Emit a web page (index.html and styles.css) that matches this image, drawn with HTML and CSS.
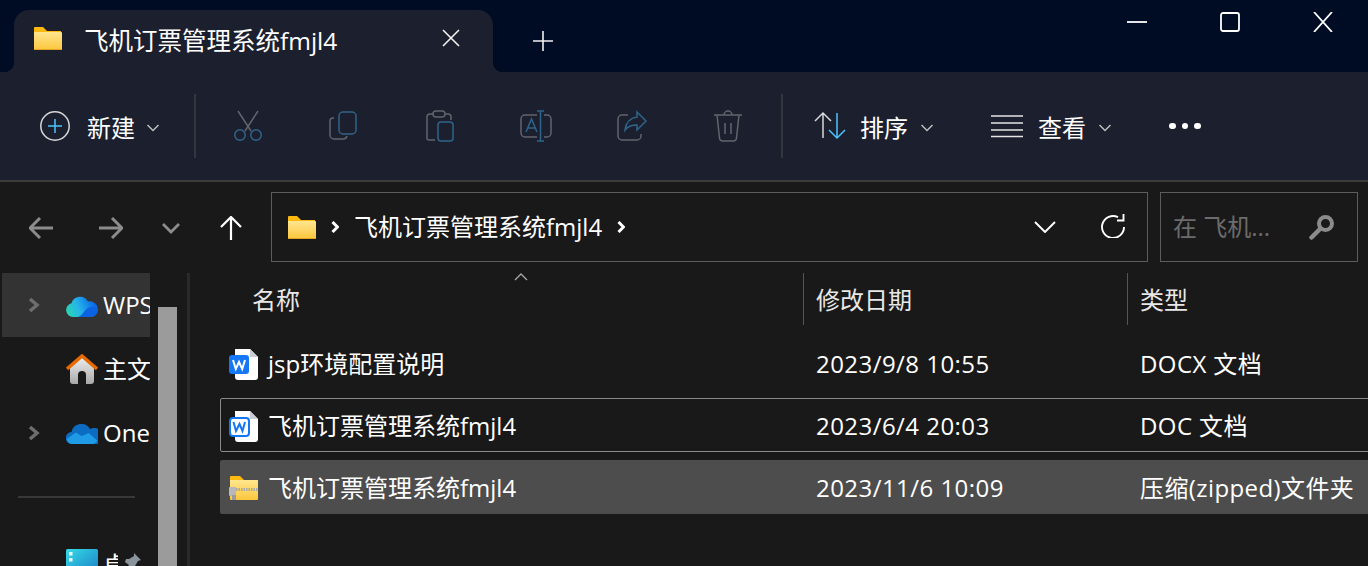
FILE: index.html
```html
<!DOCTYPE html>
<html lang="zh-CN">
  <head>
    <meta charset="UTF-8" />
    <title>飞机订票管理系统fmjl4</title>
    <link rel="stylesheet" href="styles.css">
  </head>
  <body>
    <svg class="defs" width="0" height="0">
      <defs>
        <linearGradient id="folderBody" x1="0" y1="0" x2="0" y2="1">
          <stop offset="0" stop-color="#ffe68f" />
          <stop offset="1" stop-color="#fcc63c" />
        </linearGradient>
        <linearGradient id="wpsCloud" gradientUnits="userSpaceOnUse" x1="2" y1="22" x2="28" y2="10">
          <stop offset="0" stop-color="#2ad6b4" />
          <stop offset="0.45" stop-color="#25b4ea" />
          <stop offset="1" stop-color="#0a6ae6" />
        </linearGradient>
        <linearGradient id="homeWall" x1="0" y1="0" x2="0" y2="1">
          <stop offset="0" stop-color="#f0f0f0" />
          <stop offset="1" stop-color="#a8a8a8" />
        </linearGradient>
        <linearGradient id="deskFill" x1="0" y1="0" x2="1" y2="1">
          <stop offset="0" stop-color="#36dbe6" />
          <stop offset="1" stop-color="#1b80c8" />
        </linearGradient>
        <symbol id="folder" viewBox="0 0 28 23">
          <path d="M1 0h8l4 4h14v4H0V1a1 1 0 0 1 1-1z" fill="#ffb911" />
          <path d="M0 5h27a1 1 0 0 1 1 1v16a1 1 0 0 1-1 1H1a1 1 0 0 1-1-1z" fill="url(#folderBody)" />
          <path d="M0 22h28v0a1 1 0 0 1-1 1H1a1 1 0 0 1-1-1z" fill="#e2a522" />
        </symbol>
        <symbol id="chev" viewBox="0 0 14 8">
          <path d="M1.5 1 7 6.5 12.5 1" fill="none" stroke="currentColor" stroke-width="1.5" />
        </symbol>
      </defs>
    </svg>

    <div class="titlebar">
      <div class="tab">
        <svg class="tab-folder"><use href="#folder" /></svg>
        <span class="tab-title">飞机订票管理系统fmjl4</span>
        <svg class="tab-close" viewBox="0 0 18 18"><path d="M1 1l16 16M17 1 1 17" /></svg>
      </div>
      <svg class="tab-add" viewBox="0 0 20 20"><path d="M10 0v20M0 10h20" /></svg>
      <div class="win-btns">
        <svg class="win-btn" viewBox="0 0 20 20"><path d="M0 10h20" /></svg>
        <svg class="win-btn" viewBox="0 0 20 20"><rect x="1" y="1" width="18" height="18" rx="2" /></svg>
        <svg class="win-btn" viewBox="0 0 20 20"><path d="M1 0l18 20M19 0 1 20" /></svg>
      </div>
    </div>

    <div class="toolbar">
      <div class="tool tool-new">
        <svg class="ico" viewBox="0 0 32 32">
          <circle cx="16" cy="16" r="14.2" fill="none" stroke="#d8d8d8" stroke-width="1.5" />
          <path d="M16 9v14M9 16h14" fill="none" stroke="#4cc2ff" stroke-width="1.5" />
        </svg>
        <span class="tool-label">新建</span>
        <svg class="chev-s"><use href="#chev" /></svg>
      </div>
      <div class="tool-sep"></div>
      <div class="icon-btn">
        <svg class="ico" viewBox="0 0 32 32" fill="none" stroke-width="1.5">
          <path d="M6 1 19 21M26 1 13 21" stroke="#61646c" />
          <circle cx="8" cy="25" r="5.2" stroke="#2f6389" />
          <circle cx="24" cy="25" r="5.2" stroke="#2f6389" />
        </svg>
      </div>
      <div class="icon-btn">
        <svg class="ico" viewBox="0 0 32 32" fill="none" stroke-width="1.5">
          <path d="M6 8H5a3 3 0 0 0-3 3v14a4 4 0 0 0 4 4h9a4 4 0 0 0 4-3" stroke="#61646c" />
          <rect x="11" y="2" width="17" height="22" rx="4" stroke="#2f6389" />
        </svg>
      </div>
      <div class="icon-btn">
        <svg class="ico" viewBox="0 0 32 32" fill="none" stroke-width="1.5">
          <path d="M9 4H6a3 3 0 0 0-3 3v21a2 2 0 0 0 2 2h6M21 4h3a3 3 0 0 1 3 3v3" stroke="#61646c" />
          <rect x="9" y="1" width="12" height="6" rx="3" stroke="#61646c" />
          <rect x="14" y="12" width="15" height="19" rx="3" stroke="#2f6389" />
        </svg>
      </div>
      <div class="icon-btn">
        <svg class="ico" viewBox="0 0 32 32" fill="none" stroke-width="1.5">
          <path d="M17 5H5a4 4 0 0 0-4 4v14a4 4 0 0 0 4 4h12M24 5h3a4 4 0 0 1 4 4v14a4 4 0 0 1-4 4h-3" stroke="#61646c" />
          <path d="M6 22l5.500-13L17 22M8 18h7M17 1h7M17 31h7M20.500 1v30" stroke="#2f6389" />
        </svg>
      </div>
      <div class="icon-btn">
        <svg class="ico" viewBox="0 0 32 32" fill="none" stroke-width="1.5">
          <path d="M12 5H6a4 4 0 0 0-4 4v17a4 4 0 0 0 4 4h15a4 4 0 0 0 4-4v-2" stroke="#61646c" />
          <path d="M21 2l9 9-9 9v-5c-6 0-9 1-12 5 1-8 5-12 12-13z" stroke="#2f6389" />
        </svg>
      </div>
      <div class="icon-btn">
        <svg class="ico" viewBox="0 0 32 32" fill="none" stroke="#61646c" stroke-width="1.5">
          <path d="M2 5h28M5 5l2.500 23a3 3 0 0 0 3 3h11a3 3 0 0 0 3-3L27 5M12 5a4 4 0 0 1 8 0M13 13v11M19 13v11" />
        </svg>
      </div>
      <div class="tool-sep sep-2"></div>
      <div class="tool tool-sort">
        <svg class="ico" viewBox="0 0 32 32" fill="none" stroke-width="1.5">
          <path d="M9 28V3M1 11l8-8 8 8" stroke="#d8d8d8" />
          <path d="M23 3v25M15 20l8 8 8-8" stroke="#4cc2ff" />
        </svg>
        <span class="tool-label">排序</span>
        <svg class="chev-s"><use href="#chev" /></svg>
      </div>
      <div class="tool tool-view">
        <svg class="ico" viewBox="0 0 32 32" fill="none" stroke="#e4e4e4" stroke-width="1.5">
          <path d="M0 6h32M0 13h32M0 20h32M0 26.500h32" />
        </svg>
        <span class="tool-label">查看</span>
        <svg class="chev-s"><use href="#chev" /></svg>
      </div>
      <div class="more"><i></i><i></i><i></i></div>
    </div>

    <div class="navbar">
      <div class="nav-btn first">
        <svg class="nav-ico dim" viewBox="0 0 24 22"><path d="M1 11h23M11 1 1 11l10 10" /></svg>
      </div>
      <div class="nav-btn second">
        <svg class="nav-ico dim" viewBox="0 0 24 22"><path d="M0 11h23M13 1l10 10-10 10" /></svg>
      </div>
      <div class="nav-btn">
        <svg class="nav-down dim" viewBox="0 0 18 12"><path d="M1 2l8 8 8-8" /></svg>
      </div>
      <div class="nav-btn">
        <svg class="nav-ico" viewBox="0 0 22 24"><path d="M11 24V1M1 11 11 1l10 10" /></svg>
      </div>
      <div class="address">
        <svg class="addr-folder"><use href="#folder" /></svg>
        <svg class="crumb crumb-a" viewBox="0 0 8 12"><path d="M1.500 1l5 5-5 5" /></svg>
        <span class="addr-text">飞机订票管理系统fmjl4</span>
        <svg class="crumb crumb-b" viewBox="0 0 8 12"><path d="M1.500 1l5 5-5 5" /></svg>
        <svg class="addr-down" viewBox="0 0 22 12"><path d="M1 1l10 10L21 1" /></svg>
        <svg class="addr-refresh" viewBox="0 0 24 24"><path d="M17 3.200A11 11 0 1 0 23 13M22.500 0v6.500H16" /></svg>
      </div>
      <div class="search">
        <span class="search-text">在 飞机...</span>
        <svg class="search-ico" viewBox="0 0 26 26">
          <circle cx="16.500" cy="9.500" r="6.500" fill="none" stroke="#8b8b8b" stroke-width="4" />
          <path d="M11.500 14.500 2.500 23.500" stroke="#8b8b8b" stroke-width="4.500" stroke-linecap="round" />
        </svg>
      </div>
    </div>

    <div class="main">
      <div class="sidebar">
        <div class="side-row selected">
          <svg class="side-arrow" viewBox="0 0 12 16"><path d="M2 2l7 6-7 6" /></svg>
          <svg class="side-ico" viewBox="0 0 32 24">
            <path d="M7 24a7 7 0 0 1-1.500-13.800A9 9 0 0 1 22 8.500 7.500 7.500 0 0 1 25.500 24z" fill="url(#wpsCloud)" />
            <path d="M12 24c5-1 7-10 13-10a5 5 0 0 1 7 3 7.500 7.500 0 0 1-6.500 7z" fill="#0b63e2" />
          </svg>
          <span class="side-name">WPS云盘</span>
        </div>
        <div class="side-row">
          <svg class="side-ico" viewBox="0 0 32 30">
            <path d="M4 13 16 3l12 10v14a3 3 0 0 1-3 3h-5V21a4 4 0 0 0-8 0v9H7a3 3 0 0 1-3-3z" fill="url(#homeWall)" />
            <path d="M1 15 16 2l15 13" fill="none" stroke="#e66a00" stroke-width="3.500" />
          </svg>
          <span class="side-name">主文件夹</span>
        </div>
        <div class="side-row">
          <svg class="side-arrow" viewBox="0 0 12 16"><path d="M2 2l7 6-7 6" /></svg>
          <svg class="side-ico" viewBox="0 0 32 22">
            <path d="M6 22a6 6 0 0 1-.5-12A10 10 0 0 1 24 7a7.500 7.500 0 0 1 8 15z" fill="#0c6cc2" />
            <path d="M.8 17l9-6.500 6 3.500 7-3 8.400 7.500a6 6 0 0 1-5.700 3.500H6a6 6 0 0 1-5.200-5z" fill="#1f9be6" />
          </svg>
          <span class="side-name">OneDrive</span>
        </div>
        <div class="side-line"></div>
        <div class="side-row desk">
          <svg class="side-ico" viewBox="0 0 32 24">
            <rect width="32" height="24" rx="1.500" fill="url(#deskFill)" />
            <rect x="3" y="3" width="3.500" height="3.500" fill="#e9fbff" />
            <rect x="3" y="9" width="3.500" height="3.500" fill="#e9fbff" />
          </svg>
          <span class="side-name short">桌面</span>
          <svg class="side-pin" viewBox="0 0 20 20"><path d="M12 1l7 7-3 1-3 5v3l-3 1-3-4-5 5 5-6-4-3 1-3h3l5-3z" fill="#8a949c" /></svg>
        </div>
      </div>
      <div class="scrollbar"><div class="thumb"></div></div>
      <div class="splitter"></div>

      <div class="list">
        <div class="list-head">
          <svg class="sort-caret" viewBox="0 0 14 8"><path d="M1 7l6-6 6 6" /></svg>
          <div class="col-name-h">名称</div>
          <div class="col-date-h">修改日期</div>
          <div class="col-type-h">类型</div>
        </div>
        <div class="rows">
          <div class="row">
            <div class="cell-name">
              <svg class="file-ico" viewBox="0 0 30 32">
                <path d="M6 1h15l8 8v20a3 3 0 0 1-3 3H9a3 3 0 0 1-3-3z" fill="#fff" />
                <path d="M21 1l8 8h-8z" fill="#c8ccd4" />
                <rect y="7" width="20" height="19" rx="3" fill="#1677f5" />
                <path d="M4 12l2.800 9L10 14l3.200 7L16 12" fill="none" stroke="#fff" stroke-width="2" />
              </svg>
              <span>jsp环境配置说明</span>
            </div>
            <div class="cell-date">2023/9/8 10:55</div>
            <div class="cell-type">DOCX 文档</div>
          </div>
          <div class="row focused">
            <div class="cell-name">
              <svg class="file-ico" viewBox="0 0 30 32">
                <path d="M6 1h15l8 8v20a3 3 0 0 1-3 3H9a3 3 0 0 1-3-3z" fill="#fff" />
                <path d="M21 1l8 8h-8z" fill="#c8ccd4" />
                <rect x="1" y="8" width="19" height="18" rx="3" fill="#fff" stroke="#1677f5" stroke-width="2" />
                <path d="M4.500 12l2.500 9L10.500 14l3 7L16 12" fill="none" stroke="#1677f5" stroke-width="2" />
              </svg>
              <span>飞机订票管理系统fmjl4</span>
            </div>
            <div class="cell-date">2023/6/4 20:03</div>
            <div class="cell-type">DOC 文档</div>
          </div>
          <div class="row active">
            <div class="cell-name">
              <svg class="file-ico" viewBox="0 0 30 26">
                <path d="M2 1h9l4 4h14v5H1V2a1 1 0 0 1 1-1z" fill="#ffb911" />
                <path d="M1 5h28v19a1 1 0 0 1-1 1H2a1 1 0 0 1-1-1z" fill="url(#folderBody)" />
                <path d="M7 14.500h22" stroke="#a9a9a0" stroke-width="3" stroke-dasharray="1.500 1" />
                <rect x="0" y="12" width="7" height="9" rx="1" fill="#b8b8b8" />
                <rect x="3" y="20" width="4" height="5" fill="#9a9a9a" />
              </svg>
              <span>飞机订票管理系统fmjl4</span>
            </div>
            <div class="cell-date">2023/11/6 10:09</div>
            <div class="cell-type">压缩(zipped)文件夹</div>
          </div>
        </div>
      </div>
    </div>
  </body>
</html>
```
FILE: styles.css
```css
* {
  box-sizing: border-box;
}
html,
body {
  margin: 0;
  height: 566px;
  overflow: hidden;
}
body {
  background: #191919;
  color: #fff;
  font-family: "Open Sans", "Noto Sans CJK SC", sans-serif;
  font-size: 24px;
  line-height: 32px;
  display: flex;
  flex-direction: column;
}
svg {
  display: block;
  flex: none;
}
.defs {
  position: absolute;
}

/* title bar */
.titlebar {
  height: 72px;
  flex: none;
  background: #000b24;
  display: flex;
  align-items: flex-end;
  padding-left: 14px;
}
.tab {
  position: relative;
  width: 479px;
  height: 62px;
  background: #1c202e;
  border-radius: 15px 15px 0 0;
  display: flex;
  align-items: center;
  padding: 0 0 6px 20px;
}
.tab::before,
.tab::after {
  content: "";
  position: absolute;
  bottom: 0;
  width: 10px;
  height: 10px;
}
.tab::before {
  left: -10px;
  background: radial-gradient(circle at 0 0, transparent 10px, #1c202e 10.5px);
}
.tab::after {
  right: -10px;
  background: radial-gradient(circle at 100% 0, transparent 10px, #1c202e 10.5px);
}
.tab-folder {
  width: 28px;
  height: 23px;
}
.tab-title {
  margin: 6px 0 0 22px;
  width: 358px;
  font-size: 24.500px;
  white-space: nowrap;
}
.tab-close {
  width: 18px;
  height: 18px;
  fill: none;
  stroke: #f2f2f2;
  stroke-width: 1.6;
}
.tab-add {
  width: 20px;
  height: 20px;
  margin: 0 0 21px 40px;
  fill: none;
  stroke: #f2f2f2;
  stroke-width: 1.6;
}
.win-btns {
  margin-left: auto;
  align-self: flex-start;
  display: flex;
  gap: 73px;
  padding: 12px 35px 0 0;
}
.win-btn {
  width: 20px;
  height: 20px;
  fill: none;
  stroke: #fff;
  stroke-width: 1.8;
}

/* command bar */
.toolbar {
  height: 110px;
  flex: none;
  background: #1c202e;
  border-bottom: 2px solid #3b3b3b;
  display: flex;
  align-items: center;
  padding: 0 0 0 39px;
}
.ico {
  width: 32px;
  height: 32px;
}
.tool {
  display: flex;
  align-items: center;
}
.tool-label {
  margin: 4px 0 0 16px;
}
.chev-s {
  width: 14px;
  height: 8px;
  margin: 4px 0 0 11px;
  color: #bdbdbd;
}
.tool-sep {
  width: 2px;
  height: 64px;
  background: #33363f;
  margin: 0 4px 0 34px;
}
.sep-2 {
  margin: 0 0 0 5px;
}
.icon-btn {
  width: 96px;
  display: flex;
  justify-content: center;
}
.tool-sort {
  margin-left: 31px;
}
.tool-sort .tool-label {
  margin-left: 14px;
}
.tool-sort .chev-s {
  margin-left: 12px;
}
.tool-view {
  margin-left: 57px;
}
.tool-view .tool-label {
  margin-left: 15px;
}
.tool-view .chev-s {
  margin-left: 12px;
}
.more {
  display: flex;
  gap: 6px;
  margin-left: 57px;
}
.more i {
  width: 6.500px;
  height: 6.500px;
  border-radius: 50%;
  background: #fff;
}

/* address row */
.navbar {
  height: 91px;
  flex: none;
  display: flex;
  align-items: flex-start;
  padding-top: 10px;
}
.nav-btn {
  width: 60px;
  height: 70px;
  display: flex;
  align-items: center;
  justify-content: center;
}
.nav-btn.first {
  margin-left: 11px;
}
.nav-btn.second {
  margin-left: 10px;
}
.nav-ico,
.nav-down {
  fill: none;
  stroke: #fff;
  stroke-width: 2.200;
  margin-top: 2px;
}
.nav-ico {
  width: 24px;
  height: 24px;
}
.nav-down {
  width: 18px;
  height: 12px;
  stroke-width: 2.800;
}
.nav-ico.dim {
  stroke-width: 3;
}
.dim {
  stroke: #8c8c8c;
}
.address {
  width: 877px;
  height: 70px;
  margin-left: 10px;
  border: 1px solid #5c5c5c;
  display: flex;
  align-items: center;
  padding-left: 16px;
}
.addr-folder {
  width: 28px;
  height: 23px;
}
.crumb {
  width: 8px;
  height: 12px;
  fill: none;
  stroke: #fff;
  stroke-width: 3;
}
.crumb-a {
  margin-left: 15px;
}
.addr-text {
  margin-left: 15px;
  white-space: nowrap;
}
.crumb-b {
  margin-left: 15px;
}
.addr-down {
  width: 22px;
  height: 12px;
  margin-left: auto;
  fill: none;
  stroke: #fff;
  stroke-width: 1.900;
}
.addr-refresh {
  width: 24px;
  height: 24px;
  margin: -2px 22px 0 45px;
  fill: none;
  stroke: #fff;
  stroke-width: 1.900;
}
.search {
  width: 198px;
  height: 70px;
  margin-left: 12px;
  border: 1px solid #5c5c5c;
  display: flex;
  align-items: center;
  padding-left: 12px;
}
.search-text {
  color: #6c6c6c;
  width: 136px;
  white-space: nowrap;
}
.search-ico {
  width: 26px;
  height: 26px;
}

/* tree + list */
.main {
  flex: 1;
  min-height: 0;
  display: flex;
  overflow: hidden;
}
.sidebar {
  width: 150px;
  flex: none;
  padding-left: 2px;
  overflow: hidden;
}
.side-row {
  height: 64px;
  display: flex;
  align-items: center;
  padding-left: 64px;
  position: relative;
  white-space: nowrap;
}
.side-row.selected {
  background: #333;
}
.side-arrow {
  position: absolute;
  left: 26px;
  top: 24px;
  width: 12px;
  height: 16px;
  fill: none;
  stroke: #6e6e6e;
  stroke-width: 3.500;
}
.side-ico {
  width: 32px;
  margin-right: 5px;
}
.side-line {
  height: 2px;
  background: #383838;
  margin: 31px 15px 51px 16px;
}
.side-row.desk {
  align-items: flex-start;
}
.side-name.short {
  width: 15px;
  overflow: hidden;
}
.side-pin {
  width: 20px;
  height: 20px;
  margin: 3px 0 0 4px;
}
.scrollbar {
  width: 19px;
  flex: none;
  margin-left: 8px;
  padding-top: 34px;
}
.thumb {
  height: 100%;
  background: #9b9b9b;
}
.splitter {
  width: 3px;
  flex: none;
  margin-left: 10px;
  background: #2a2a2a;
}
.list {
  flex: 1;
  min-width: 0;
  position: relative;
}
.list-head {
  height: 52px;
  display: flex;
  align-items: stretch;
  color: #e8e8e8;
  position: relative;
}
.sort-caret {
  position: absolute;
  left: 324px;
  top: 0;
  width: 14px;
  height: 8px;
  fill: none;
  stroke: #a8a8a8;
  stroke-width: 1.300;
}
.list-head > div {
  padding: 11px 0 0 12px;
}
.list-head > .col-name-h {
  width: 614px;
  padding-left: 62px;
  border-right: 1px solid #555;
}
.col-date-h {
  width: 324px;
  border-right: 1px solid #555;
}
.rows {
  padding: 11px 0 0 30px;
  display: flex;
  flex-direction: column;
  gap: 8px;
}
.row {
  height: 54px;
  margin-right: -10px;
  padding-top: 2px;
  display: flex;
  align-items: center;
  border: 1px solid transparent;
  border-radius: 2px;
  white-space: nowrap;
}
.row.focused {
  border-color: #8a8a8a;
}
.row.active {
  background: #4d4d4d;
}
.cell-name {
  width: 595px;
  display: flex;
  align-items: center;
  padding-left: 8px;
  gap: 9px;
}
.file-ico {
  width: 30px;
  height: 32px;
}
.cell-date {
  width: 324px;
  letter-spacing: 0.450px;
}
.cell-type {
  letter-spacing: 0.400px;
}
```
